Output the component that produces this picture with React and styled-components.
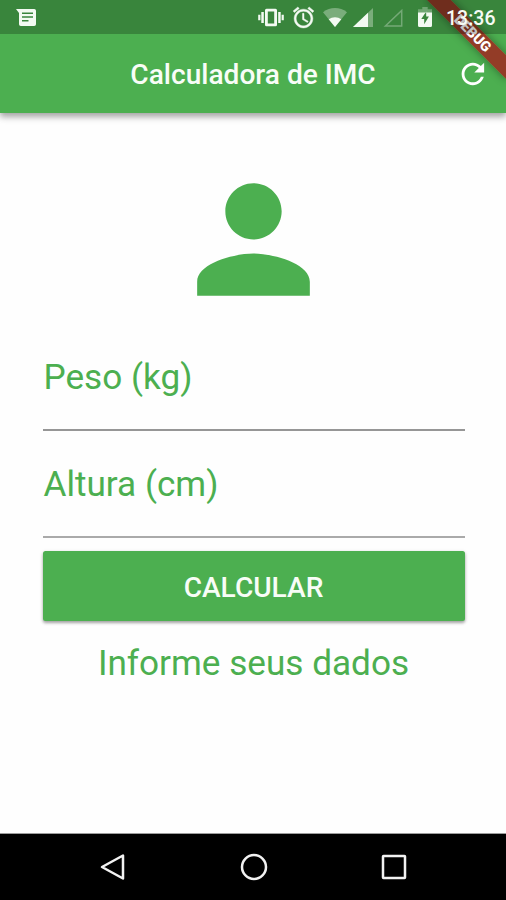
import React from "react";
import styled, { createGlobalStyle } from "styled-components";

const GlobalStyle = createGlobalStyle`
  *, *::before, *::after { box-sizing: border-box; }
  body { margin: 0; background: #fff; }
`;

const green = "#4caf50";

const Screen = styled.div`
  position: relative;
  display: flex;
  flex-direction: column;
  width: 506px;
  height: 900px;
  overflow: hidden;
  background: #fefefe;
  font-family: Roboto, "Liberation Sans", sans-serif;
`;

const Header = styled.header`
  position: relative;
  flex: none;
  background: ${green};
  box-shadow: 0 3px 6px rgba(0, 0, 0, 0.28), 0 5px 7px rgba(0, 0, 0, 0.12);
`;

const StatusBar = styled.div`
  position: relative;
  z-index: 2;
  display: flex;
  align-items: center;
  height: 34px;
  padding: 0 11px 0 16px;
  background: rgba(0, 0, 0, 0.24);
`;

const StatusIcons = styled.div`
  display: flex;
  align-items: center;
  margin-left: auto;
`;

const StatusIcon = styled.svg`
  display: block;
  flex: none;
  width: ${(p) => p.$w}px;
  height: ${(p) => p.$h}px;
  margin-right: ${(p) => p.$gap || 0}px;
  fill: #f3faf2;
  overflow: visible;
`;

const Clock = styled.time`
  width: 49px;
  margin-top: 3px;
  color: #f6fbf5;
  font-size: 19.5px;
  font-weight: 500;
  line-height: 24px;
  text-align: right;
  white-space: nowrap;
`;

const AppBar = styled.div`
  display: grid;
  grid-template-columns: 56px 1fr 56px;
  align-items: center;
  height: 79px;
  padding: 0 5px;
`;

const Title = styled.h1`
  grid-column: 2;
  margin: 0;
  padding-top: 2px;
  color: #f8fdf7;
  font-size: 28.1px;
  font-weight: 500;
  line-height: 34px;
  text-align: center;
  white-space: nowrap;
`;

const IconButton = styled.button`
  display: grid;
  place-items: center;
  height: 56px;
  padding: 0;
  border: 0;
  background: none;

  svg {
    width: 33.75px;
    height: 33.75px;
    fill: #fff;
  }
`;

const BannerClip = styled.div`
  position: absolute;
  z-index: 1;
  top: 0;
  right: 0;
  width: 100px;
  height: 100px;
  overflow: hidden;
  pointer-events: none;
`;

const Banner = styled.div`
  position: absolute;
  top: 25.4px;
  right: -22.7px;
  width: 113px;
  height: 17px;
  background: rgba(168, 28, 28, 0.78);
  box-shadow: 0 0 8px rgba(0, 0, 0, 0.4);
  color: #fff;
  font-size: 14.3px;
  font-weight: 900;
  line-height: 17px;
  text-align: center;
  transform: rotate(45deg);
`;

const Content = styled.main`
  display: flex;
  flex: 1;
  flex-direction: column;
  padding: 42px 41.5px 0 42.5px;
`;

const Avatar = styled.svg`
  align-self: center;
  flex: none;
  width: 169px;
  height: 169px;
  fill: ${green};
`;

const Field = styled.label`
  display: block;
  flex: none;
  height: 107px;
  padding-top: 32px;
  border-bottom: 2px solid #969696;
  color: ${green};
  font-size: 35.15px;
  line-height: 42px;

  & + & {
    border-bottom-color: #aaa;
  }
`;

const FieldText = styled.span`
  display: block;
  padding-left: 1px;
`;

const SubmitButton = styled.button`
  flex: none;
  height: 70px;
  margin: 13px 0 0;
  padding: 4px 0 0;
  border: 0;
  border-radius: 2.5px;
  background: ${green};
  box-shadow: 0 2px 3px rgba(0, 0, 0, 0.3), 0 1px 4px rgba(0, 0, 0, 0.12);
  color: #f8fdf7;
  font-family: inherit;
  font-size: 28.1px;
  font-weight: 500;
  line-height: 34px;
`;

const Result = styled.p`
  margin: 21px 0 0;
  color: ${green};
  font-size: 35.15px;
  line-height: 42px;
  text-align: center;
  white-space: nowrap;
`;

const NavBar = styled.nav`
  display: grid;
  grid-template-columns: repeat(3, 140.5px);
  justify-content: center;
  align-items: center;
  flex: none;
  height: 66px;
  padding-left: 1px;
  background: #000;
  box-shadow: 0 -1px 0 #9c9c9c;

  svg {
    display: block;
    width: 32px;
    height: 32px;
    margin: 0 auto;
    fill: none;
    stroke: #f2f2f2;
    stroke-width: 2.5;
    stroke-linejoin: round;
  }
`;

export default function App() {
  return (
    <Screen>
      <GlobalStyle />
      <Header>
        <StatusBar>
          <StatusIcon $w={20} $h={17} viewBox="0 0 20 17">
            <path
              fillRule="evenodd"
              d="M0 0h18.2q1.8 0 1.8 1.8v13.400q0 1.8-1.8 1.8H4.800q-1.800 0-1.800-1.800V4zM6 3.600v1.500h11V3.600zm0 3.700v1.500h11V7.300zm0 3.700v1.500h6.500V11z"
            />
          </StatusIcon>
          <StatusIcons>
            <StatusIcon $w={26} $h={23} $gap={7} viewBox="0 0 26 23">
              <path
                fillRule="evenodd"
                d="M8.500 2.800h9q1.500 0 1.500 1.500v14.400q0 1.500-1.500 1.500h-9q-1.500 0-1.500-1.500V4.300q0-1.500 1.500-1.500zM9.800 5.500v12h6.400v-12z"
              />
              <path d="M3.300 6h2.500v11H3.300zM20.200 6h2.500v11h-2.500zM0.200 8.700h2.200v5.600H0.200zM23.600 8.700h2.200v5.600h-2.200z" />
            </StatusIcon>
            <StatusIcon $w={25} $h={25} $gap={7} viewBox="0 0 24 24">
              <path
                d="M22 5.720l-4.600-3.860-1.290 1.530 4.600 3.860L22 5.720zM7.880 3.390L6.600 1.860 2 5.710l1.290 1.530 4.590-3.850zM12.500 8H11v6l4.750 2.850.75-1.230-4-2.370V8zM12 4c-4.970 0-9 4.030-9 9s4.020 9 9 9c4.970 0 9-4.030 9-9s-4.030-9-9-9zm0 16c-3.870 0-7-3.130-7-7s3.130-7 7-7 7 3.130 7 7-3.130 7-7 7z"
                stroke="#f3faf2"
                strokeWidth="0.400"
              />
            </StatusIcon>
            <StatusIcon $w={24} $h={19} $gap={6} viewBox="0 0 24 19">
              <path d="M0 4.200Q5.500 0 12 0t12 4.200L12 19z" opacity="0.35" />
              <path d="M5.700 11.200Q8.500 9.300 12 9.300t6.300 1.900L12 19z" />
            </StatusIcon>
            <StatusIcon $w={20} $h={19} $gap={10} viewBox="0 0 20 19">
              <path d="M20 0v19H0z" opacity="0.35" />
              <path d="M15 4.800V19H0z" />
            </StatusIcon>
            <StatusIcon $w={20} $h={19} $gap={15} viewBox="0 0 20 19">
              <path
                d="M18.700 2.500v15.500H2.400z"
                fill="none"
                stroke="#fff"
                strokeWidth="1.500"
                opacity="0.3"
              />
            </StatusIcon>
            <StatusIcon $w={14} $h={20} $gap={14} viewBox="0 0 14 20">
              <path d="M4.300 0h5.400v2.200H14v4H0v-4h4.300z" opacity="0.3" />
              <path
                fillRule="evenodd"
                d="M0 5.600h14v12.900q0 1.500-1.500 1.500h-11Q0 20 0 18.500zM8.200 4.500L3.300 12.100h2.900v5.200l4.700-7.700H8.200z"
              />
            </StatusIcon>
            <Clock>13:36</Clock>
          </StatusIcons>
        </StatusBar>
        <AppBar>
          <Title>Calculadora de IMC</Title>
          <IconButton aria-label="Limpar">
            <svg viewBox="0 0 24 24">
              <path d="M17.650 6.350C16.200 4.900 14.210 4 12 4c-4.420 0-7.990 3.580-7.990 8s3.570 8 7.990 8c3.730 0 6.840-2.550 7.730-6h-2.080c-.82 2.330-3.040 4-5.650 4-3.310 0-6-2.690-6-6s2.690-6 6-6c1.660 0 3.140.69 4.220 1.780L13 11h7V4l-2.350 2.350z" />
            </svg>
          </IconButton>
        </AppBar>
        <BannerClip>
          <Banner>DEBUG</Banner>
        </BannerClip>
      </Header>
      <Content>
        <Avatar viewBox="0 0 24 24">
          <path d="M12 12c2.210 0 4-1.790 4-4s-1.790-4-4-4-4 1.790-4 4 1.790 4 4 4zm0 2c-2.670 0-8 1.340-8 4v2h16v-2c0-2.660-5.330-4-8-4z" />
        </Avatar>
        <Field>
          <FieldText>Peso (kg)</FieldText>
        </Field>
        <Field>
          <FieldText>Altura (cm)</FieldText>
        </Field>
        <SubmitButton>CALCULAR</SubmitButton>
        <Result>Informe seus dados</Result>
      </Content>
      <NavBar>
        <svg viewBox="0 0 32 32">
          <path d="M26 4.500v23L5 16z" />
        </svg>
        <svg viewBox="0 0 32 32">
          <circle cx="16" cy="16" r="12" />
        </svg>
        <svg viewBox="0 0 32 32">
          <rect x="5" y="5" width="22" height="22" rx="0.500" />
        </svg>
      </NavBar>
    </Screen>
  );
}
